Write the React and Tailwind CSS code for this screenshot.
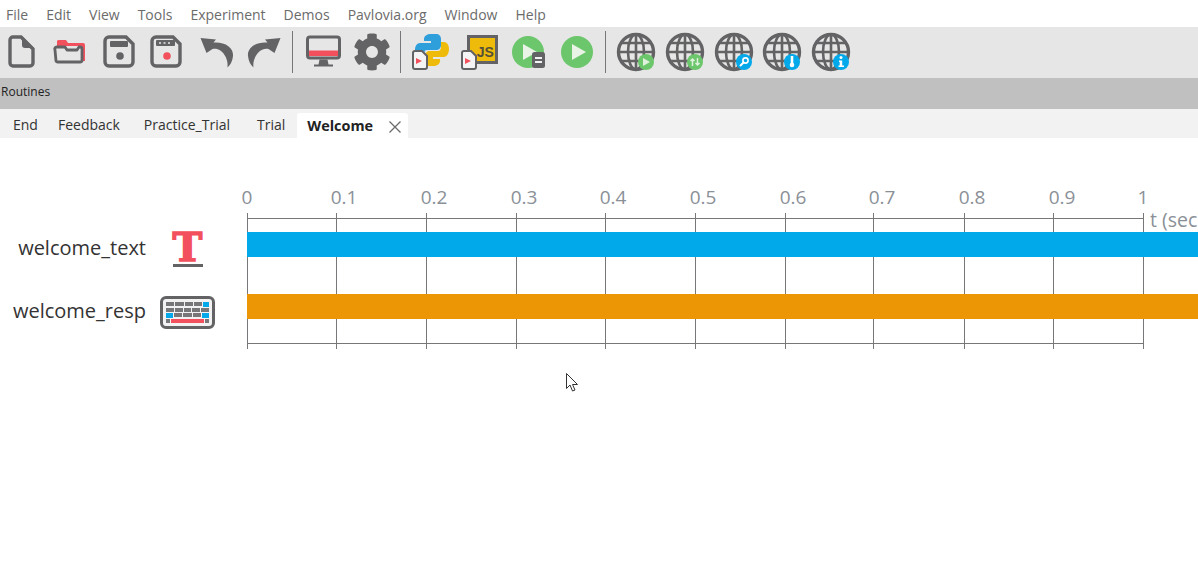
import { FaCog } from 'react-icons/fa'

const menus = ['File', 'Edit', 'View', 'Tools', 'Experiment', 'Demos', 'Pavlovia.org', 'Window', 'Help']

const tabs = [
  { label: 'End', gap: 'ml-[12px]' },
  { label: 'Feedback', gap: 'ml-[20px]' },
  { label: 'Practice_Trial', gap: 'ml-[24px]' },
  { label: 'Trial', gap: 'ml-[27px]' },
]

// x = grid line, lx = where its number sits
const ticks = [
  { label: '0', x: 0, lx: 0 },
  { label: '0.1', x: 89, lx: 97 },
  { label: '0.2', x: 179, lx: 187 },
  { label: '0.3', x: 269, lx: 277 },
  { label: '0.4', x: 358, lx: 366 },
  { label: '0.5', x: 448, lx: 456 },
  { label: '0.6', x: 538, lx: 546 },
  { label: '0.7', x: 626, lx: 635 },
  { label: '0.8', x: 717, lx: 725 },
  { label: '0.9', x: 806, lx: 815 },
  { label: '1', x: 896, lx: 896 },
]

const gray = '#636366'
const red = '#f2505d'
const blue = '#02a9ea'
const green = '#6cc66c'

function Icon({ children }) {
  return (
    <svg width="40" height="40" viewBox="0 0 40 40" className="shrink-0">
      {children}
    </svg>
  )
}

function FileIcon() {
  return (
    <Icon>
      <path d="M12 5h8l12 12v14a3 3 0 0 1-3 3H12a3 3 0 0 1-3-3V8a3 3 0 0 1 3-3z" fill="none" stroke={gray} strokeWidth="3.4" />
      <path d="M21 4l12 12h-9a3 3 0 0 1-3-3z" fill={gray} />
    </Icon>
  )
}

function FolderIcon() {
  return (
    <Icon>
      <path d="M7 12v-3a2 2 0 0 1 2-1h7l2 3h15a2 2 0 0 1 2 2v16h-3V14H7z" fill={red} />
      <path d="M5 18l1 11a2 2 0 0 0 2 1h22a2 2 0 0 0 2-1V17a2 2 0 0 0-2-2l-1 0-2 3H17l-2-3H7a2 2 0 0 0-2 3z" fill="none" stroke={gray} strokeWidth="2.8" strokeLinejoin="round" />
    </Icon>
  )
}

function SaveIcon() {
  return (
    <Icon>
      <path d="M10 5h17l7 7v18a4 4 0 0 1-4 4H10a4 4 0 0 1-4-4V9a4 4 0 0 1 4-4z" fill="none" stroke={gray} strokeWidth="3.4" />
      <rect x="11" y="9" width="18" height="6" rx="1" fill={gray} />
      <circle cx="21" cy="24" r="3.8" fill={gray} />
    </Icon>
  )
}

function SaveAsIcon() {
  return (
    <Icon>
      <path d="M9 5h17l7 7v18a4 4 0 0 1-4 4H9a4 4 0 0 1-4-4V9a4 4 0 0 1 4-4z" fill="none" stroke={gray} strokeWidth="3.4" />
      <rect x="9" y="8" width="19" height="6" rx="1" fill={gray} />
      <path d="M12 11h2M16.5 11h2M21 11h2" stroke="#e6e6e6" strokeWidth="1.6" />
      <circle cx="20" cy="24" r="3.8" fill={red} />
    </Icon>
  )
}

function UndoIcon({ flip }) {
  return (
    <Icon>
      <g transform={flip ? 'translate(40 0) scale(-1 1)' : undefined}>
        <path d="M4.5 6L20 7.500L17.500 10.500C28 9.500 38 15 37 24C36.500 29 34.500 33 31.500 35.500C33 27 26 15 16.500 17L10.500 21Z" fill={gray} />
      </g>
    </Icon>
  )
}

function MonitorIcon() {
  return (
    <Icon>
      <rect x="3.5" y="5" width="32" height="21" rx="2.5" fill="none" stroke={gray} strokeWidth="3" />
      <rect x="5" y="18.500" width="29" height="5.500" fill={red} />
      <path d="M15.500 27.500h8l1 5h4.500v2H10v-2h4.500z" fill={gray} />
    </Icon>
  )
}

function SmallDoc({ x, y }) {
  return (
    <g transform={`translate(${x} ${y})`}>
      <path d="M2 0h7l5 5v11a2 2 0 0 1-2 2H2a2 2 0 0 1-2-2V2a2 2 0 0 1 2-2z" fill="#f4f4f4" stroke={gray} strokeWidth="2" />
      <path d="M3 7l6 3-6 3z" fill={red} />
    </g>
  )
}

function PythonIcon() {
  return (
    <Icon>
      <path d="M20 2h5c3 0 5 2 5 5v6c0 3-2 5-5 5h-9c-2 0-3 2-3 4v3H9c-3 0-5-3-5-7s2-7 5-7h11v-2h-7V7c0-3 3-5 7-5z" fill="#2f9fdc" />
      <path d="M30 10h3c3 0 5 3 5 7s-2 8-5 8H22v2h7v2c0 3-3 5-7 5h-3c-3 0-5-2-5-5v-5c0-3 2-5 5-5h8c2 0 3-2 3-4z" fill="#eebb0a" />
      <SmallDoc x="2" y="19" />
    </Icon>
  )
}

function JsIcon() {
  return (
    <div className="relative h-10 w-10 shrink-0">
      <div className="absolute left-[7px] top-[3px] flex h-[29px] w-[31px] items-end justify-end border-[3px] border-[#636366] bg-[#eebb0a] pr-[1px] font-['Liberation_Sans',sans-serif] text-[14px] font-bold leading-[17px] text-[#55503a]">
        JS
      </div>
      <svg width="40" height="40" viewBox="0 0 40 40" className="absolute left-0 top-0">
        <SmallDoc x="2" y="19" />
      </svg>
    </div>
  )
}

function RunIcon({ badge }) {
  return (
    <Icon>
      <circle cx={badge ? 19 : 20} cy="20" r="16" fill={green} />
      <path d={badge ? 'M14 12l14 8-14 8z' : 'M15 12l14 8-14 8z'} fill="#e9f3e6" />
      {badge && (
        <>
          <rect x="23" y="20" width="13" height="16" rx="2.5" fill={gray} />
          <path d="M26 26h7M26 30h7" stroke="#f2f2f2" strokeWidth="1.8" />
        </>
      )}
    </Icon>
  )
}

function GlobeIcon({ badge }) {
  const color = badge === 'run' || badge === 'sync' ? green : blue
  return (
    <Icon>
      <g fill="none" stroke={gray} strokeWidth="2.6">
        <circle cx="20" cy="20" r="17.5" strokeWidth="3.4" />
        <ellipse cx="20" cy="20" rx="8" ry="17.5" />
        <path d="M20 3v34M3 20h34M5.5 11h29M5.5 29h29" />
      </g>
      <circle cx="30" cy="30" r="8" fill={color} />
      {badge === 'run' && <path d="M27 26l7 4-7 4z" fill="#dff1dc" />}
      {badge === 'sync' && <path d="M27.500 34v-7M25.500 29l2-2 2 2M32.500 26v7M30.500 31l2 2 2-2" fill="none" stroke="#dff1dc" strokeWidth="1.5" />}
      {badge === 'search' && (
        <>
          <circle cx="31.500" cy="28.500" r="2.600" fill="none" stroke="#ffffff" strokeWidth="1.600" />
          <path d="M29.500 30.500l-3.500 3.500" stroke="#ffffff" strokeWidth="2" />
        </>
      )}
      {badge === 'thermo' && (
        <>
          <rect x="28.700" y="24" width="2.600" height="8" fill="#ffffff" />
          <circle cx="30" cy="33" r="2.300" fill="#ffffff" />
        </>
      )}
      {badge === 'info' && (
        <>
          <circle cx="30" cy="25.500" r="1.500" fill="#ffffff" />
          <path d="M28 28.500h3.200v5H33v1.500h-5.500v-1.500h1.200v-3.500H28z" fill="#ffffff" />
        </>
      )}
    </Icon>
  )
}

function Keyboard() {
  const key = 'h-[4px] bg-[#77777a]'
  return (
    <div className="flex h-[33px] w-[55px] flex-col justify-center gap-[1px] rounded-[6px] border-[3px] border-[#636366] bg-[#f2f2f2] px-[3px]">
      <div className="flex gap-[1px]">
        <div className={`${key} flex-1`} />
        <div className={`${key} flex-1`} />
        <div className={`${key} flex-1`} />
        <div className={`${key} flex-1`} />
        <div className="h-[5px] w-[6px] bg-[#02a9ea]" />
      </div>
      <div className="flex gap-[1px]">
        <div className={`${key} flex-1`} />
        <div className={`${key} flex-1`} />
        <div className={`${key} flex-1`} />
        <div className={`${key} flex-1`} />
        <div className={`${key} flex-1`} />
      </div>
      <div className="flex gap-[1px]">
        <div className="h-[5px] w-[7px] bg-[#02a9ea]" />
        <div className={`${key} flex-1`} />
        <div className={`${key} flex-1`} />
        <div className={`${key} flex-1`} />
        <div className="h-[5px] w-[7px] bg-[#02a9ea]" />
      </div>
      <div className="flex gap-[1px]">
        <div className={`${key} w-[4px]`} />
        <div className="h-[4px] flex-1 bg-[#f2505d]" />
        <div className={`${key} w-[4px]`} />
      </div>
    </div>
  )
}

function Sep({ className = '' }) {
  return <div className={`h-[42px] w-[1px] shrink-0 bg-[#77777a] ${className}`} />
}

function Row({ label, children }) {
  return (
    <div className="flex h-[63px] items-center justify-end pr-[32px]">
      <span className="-mt-[3px] whitespace-nowrap text-[20px] text-[#333333]">{label}</span>
      <div className="ml-[14px] flex w-[55px] justify-center">{children}</div>
    </div>
  )
}

export default function App() {
  return (
    <div className="flex h-[586px] w-[1198px] flex-col overflow-hidden bg-white font-['Open_Sans',sans-serif]">
      {/* Menu */}
      <div className="flex h-[27px] shrink-0 items-center gap-[18px] pl-[6px] pt-[2px] text-[14px] text-[#6b6b6b]">
        {menus.map(m => (
          <span key={m}>{m}</span>
        ))}
      </div>

      {/* Toolbar */}
      <div className="flex h-[51px] shrink-0 items-center gap-[8.800px] bg-[#e6e6e6] pb-[2px] pl-[1px]">
        <FileIcon />
        <FolderIcon />
        <SaveIcon />
        <SaveAsIcon />
        <UndoIcon />
        <UndoIcon flip />
        <Sep className="-ml-[2px] mr-[2px]" />
        <MonitorIcon />
        <div className="flex h-10 w-10 shrink-0 items-center justify-center">
          <FaCog size={38} color={gray} />
        </div>
        <Sep className="-ml-[1px] mr-[1px]" />
        <PythonIcon />
        <JsIcon />
        <RunIcon badge />
        <RunIcon />
        <Sep className="-ml-[1px] mr-[1px]" />
        <GlobeIcon badge="run" />
        <GlobeIcon badge="sync" />
        <GlobeIcon badge="search" />
        <GlobeIcon badge="thermo" />
        <GlobeIcon badge="info" />
      </div>

      {/* Routines */}
      <div className="flex h-[31px] shrink-0 items-center bg-[#c0c0c0] pb-[3px] pl-[1px] text-[12px] text-[#222222]">Routines</div>

      {/* Tabs */}
      <div className="flex h-[29px] shrink-0 items-end bg-[#f2f2f2] pl-[1px] text-[14px] text-[#333333]">
        {tabs.map(t => (
          <div key={t.label} className={`flex h-[27px] items-center ${t.gap}`}>
            {t.label}
          </div>
        ))}
        <div className="ml-[12px] flex h-[25px] w-[111px] items-center rounded-t-[3px] bg-white pl-[10px] text-[14.400px] font-bold text-[#222222]">
          Welcome
          <svg width="14" height="14" viewBox="0 0 14 14" className="ml-[15px] mt-[3px]">
            <path d="M1.500 1.500l11 11M12.500 1.500l-11 11" stroke="#6b6b6b" strokeWidth="1.300" />
          </svg>
        </div>
      </div>

      {/* Timeline */}
      <div className="relative flex flex-1 pt-[80px]">
        <div className="flex w-[247px] shrink-0 flex-col">
          <Row label="welcome_text">
            <div className="-mt-[2px] flex flex-col items-center">
              <span className="font-['DejaVu_Serif',serif] text-[40px] font-bold leading-[34px] text-[#f2505d] [-webkit-text-stroke:1.500px_#f2505d]">T</span>
              <div className="h-[3px] w-[30px] bg-[#636366]" />
            </div>
          </Row>
          <Row label="welcome_resp">
            <Keyboard />
          </Row>
        </div>

        <div className="relative h-[135px] flex-1 pt-[14px]">
          <div className="absolute left-0 top-0 h-[1px] w-[897px] bg-[#77777a]" />
          <div className="absolute left-0 top-[125px] h-[1px] w-[897px] bg-[#77777a]" />
          {ticks.map(t => (
            <div key={t.label}>
              <div className="absolute top-[-5px] h-[136px] w-[1px] bg-[#77777a]" style={{ left: t.x }} />
              <span className="absolute top-[-35px] w-[40px] -translate-x-1/2 text-center text-[19px] leading-[28px] text-[#8a9097]" style={{ left: t.lx }}>
                {t.label}
              </span>
            </div>
          ))}
          <span className="absolute left-[903px] top-[-12px] whitespace-nowrap text-[19.500px] leading-[28px] text-[#8a9097]">t (sec)</span>
          <div className="relative h-[25px] bg-[#02a9ea]" />
          <div className="relative mt-[37px] h-[25px] bg-[#ec9605]" />
        </div>

        {/* mouse cursor */}
        <svg width="14" height="20" viewBox="0 0 14 20" className="absolute left-[566px] top-[235px]">
          <path d="M0.500 0.500v15l3.500-3.500 2.500 6 2.500-1-2.500-5.500h5z" fill="#ffffff" stroke="#333333" strokeWidth="1" />
        </svg>
      </div>
    </div>
  )
}
